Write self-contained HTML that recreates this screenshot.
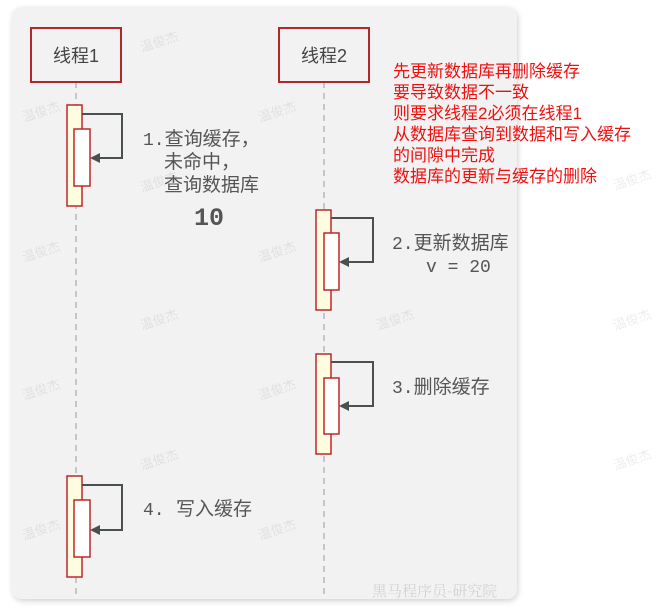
<!DOCTYPE html>
<html><head><meta charset="utf-8"><style>
html,body{margin:0;padding:0;background:#fff;width:663px;height:611px;overflow:hidden}
svg{display:block}
.m{font-family:"Liberation Mono","Noto Sans CJK SC",monospace;font-size:18px;fill:#555}
.m tspan.c{font-family:"Noto Sans CJK SC",sans-serif;font-size:19px}
.r{font-family:"Liberation Sans","Noto Sans CJK SC",sans-serif;font-size:17px;fill:#f01010}
.w{font-family:"Liberation Sans","Noto Sans CJK SC",sans-serif;font-size:13px;fill:#000;opacity:.07}
</style></head><body>
<svg width="663" height="611" viewBox="0 0 663 611" xmlns="http://www.w3.org/2000/svg">
<defs><filter id="s" x="-5%" y="-5%" width="110%" height="110%"><feDropShadow dx="1" dy="2" stdDeviation="3" flood-opacity="0.18"/></filter></defs>
<rect x="12" y="7" width="505" height="592" rx="10" fill="#f2f2f2" filter="url(#s)"/>
<g>
<text class="w" x="142" y="52" transform="rotate(-18 142 52)">温俊杰</text>
<text class="w" x="24" y="122" transform="rotate(-18 24 122)">温俊杰</text>
<text class="w" x="260" y="122" transform="rotate(-18 260 122)">温俊杰</text>
<text class="w" x="142" y="192" transform="rotate(-18 142 192)">温俊杰</text>
<text class="w" x="24" y="262" transform="rotate(-18 24 262)">温俊杰</text>
<text class="w" x="260" y="262" transform="rotate(-18 260 262)">温俊杰</text>
<text class="w" x="142" y="330" transform="rotate(-18 142 330)">温俊杰</text>
<text class="w" x="378" y="330" transform="rotate(-18 378 330)">温俊杰</text>
<text class="w" x="24" y="400" transform="rotate(-18 24 400)">温俊杰</text>
<text class="w" x="260" y="400" transform="rotate(-18 260 400)">温俊杰</text>
<text class="w" x="142" y="470" transform="rotate(-18 142 470)">温俊杰</text>
<text class="w" x="24" y="540" transform="rotate(-18 24 540)">温俊杰</text>
<text class="w" x="260" y="540" transform="rotate(-18 260 540)">温俊杰</text>
<text class="w" x="615" y="330" transform="rotate(-18 615 330)">温俊杰</text>
<text class="w" x="615" y="190" transform="rotate(-18 615 190)">温俊杰</text>
<text class="w" x="615" y="470" transform="rotate(-18 615 470)">温俊杰</text>
</g>
<g stroke="#b8b8b8" stroke-width="1.5" stroke-dasharray="6,5">
<line x1="76" y1="82" x2="76" y2="598"/>
<line x1="324" y1="82" x2="324" y2="598"/>
</g>
<g fill="#f2f2f2" stroke="#b3272a" stroke-width="2">
<rect x="31" y="28" width="90" height="54"/>
<rect x="279" y="28" width="90" height="54"/>
</g>
<text x="76" y="62" text-anchor="middle" font-family="Liberation Sans,Noto Sans CJK SC,sans-serif" font-size="18" fill="#444">线程1</text>
<text x="324" y="62" text-anchor="middle" font-family="Liberation Sans,Noto Sans CJK SC,sans-serif" font-size="18" fill="#444">线程2</text>
<g stroke="#c0272a" stroke-width="1.5">
<rect x="67" y="105" width="15" height="101" fill="#fffde0"/>
<rect x="74" y="129" width="16" height="57" fill="#fff"/>
<rect x="316" y="210" width="15" height="100" fill="#fffde0"/>
<rect x="324" y="233" width="15" height="57" fill="#fff"/>
<rect x="316" y="354" width="15" height="100" fill="#fffde0"/>
<rect x="324" y="378" width="15" height="56" fill="#fff"/>
<rect x="67" y="476" width="15" height="101" fill="#fffde0"/>
<rect x="74" y="500" width="16" height="57" fill="#fff"/>
</g>
<g stroke="#4a5050" stroke-width="2" fill="none">
<polyline points="82,114 122,114 122,158 96,158"/>
<polyline points="331,218 373,218 373,262 345,262"/>
<polyline points="331,362 373,362 373,406 345,406"/>
<polyline points="82,485 122,485 122,530 96,530"/>
</g>
<g fill="#4a5050">
<polygon points="90,158 100,153 100,163"/>
<polygon points="339,262 349,257 349,267"/>
<polygon points="339,406 349,401 349,411"/>
<polygon points="90,530 100,525 100,535"/>
</g>
<text class="m" x="143" y="145">1.<tspan class="c">查询缓存，</tspan></text>
<text class="m" x="164" y="168"><tspan class="c">未命中，</tspan></text>
<text class="m" x="164" y="191"><tspan class="c">查询数据库</tspan></text>
<text class="m" x="194" y="225" font-weight="bold" style="font-size:25px">10</text>
<text class="m" x="392" y="249">2.<tspan class="c">更新数据库</tspan></text>
<text class="m" x="426" y="272">v = 20</text>
<text class="m" x="392" y="393">3.<tspan class="c">删除缓存</tspan></text>
<text class="m" x="143" y="515">4. <tspan class="c" x="176">写入缓存</tspan></text>
<text x="372" y="596" font-family="Noto Serif CJK SC,serif" font-size="15" fill="#000" opacity="0.13">黑马程序员-研究院</text>
<text class="r" x="393" y="77">先更新数据库再删除缓存</text>
<text class="r" x="393" y="98">要导致数据不一致</text>
<text class="r" x="393" y="119">则要求线程2必须在线程1</text>
<text class="r" x="393" y="140">从数据库查询到数据和写入缓存</text>
<text class="r" x="393" y="161">的间隙中完成</text>
<text class="r" x="393" y="182">数据库的更新与缓存的删除</text>
</svg>
</body></html>
